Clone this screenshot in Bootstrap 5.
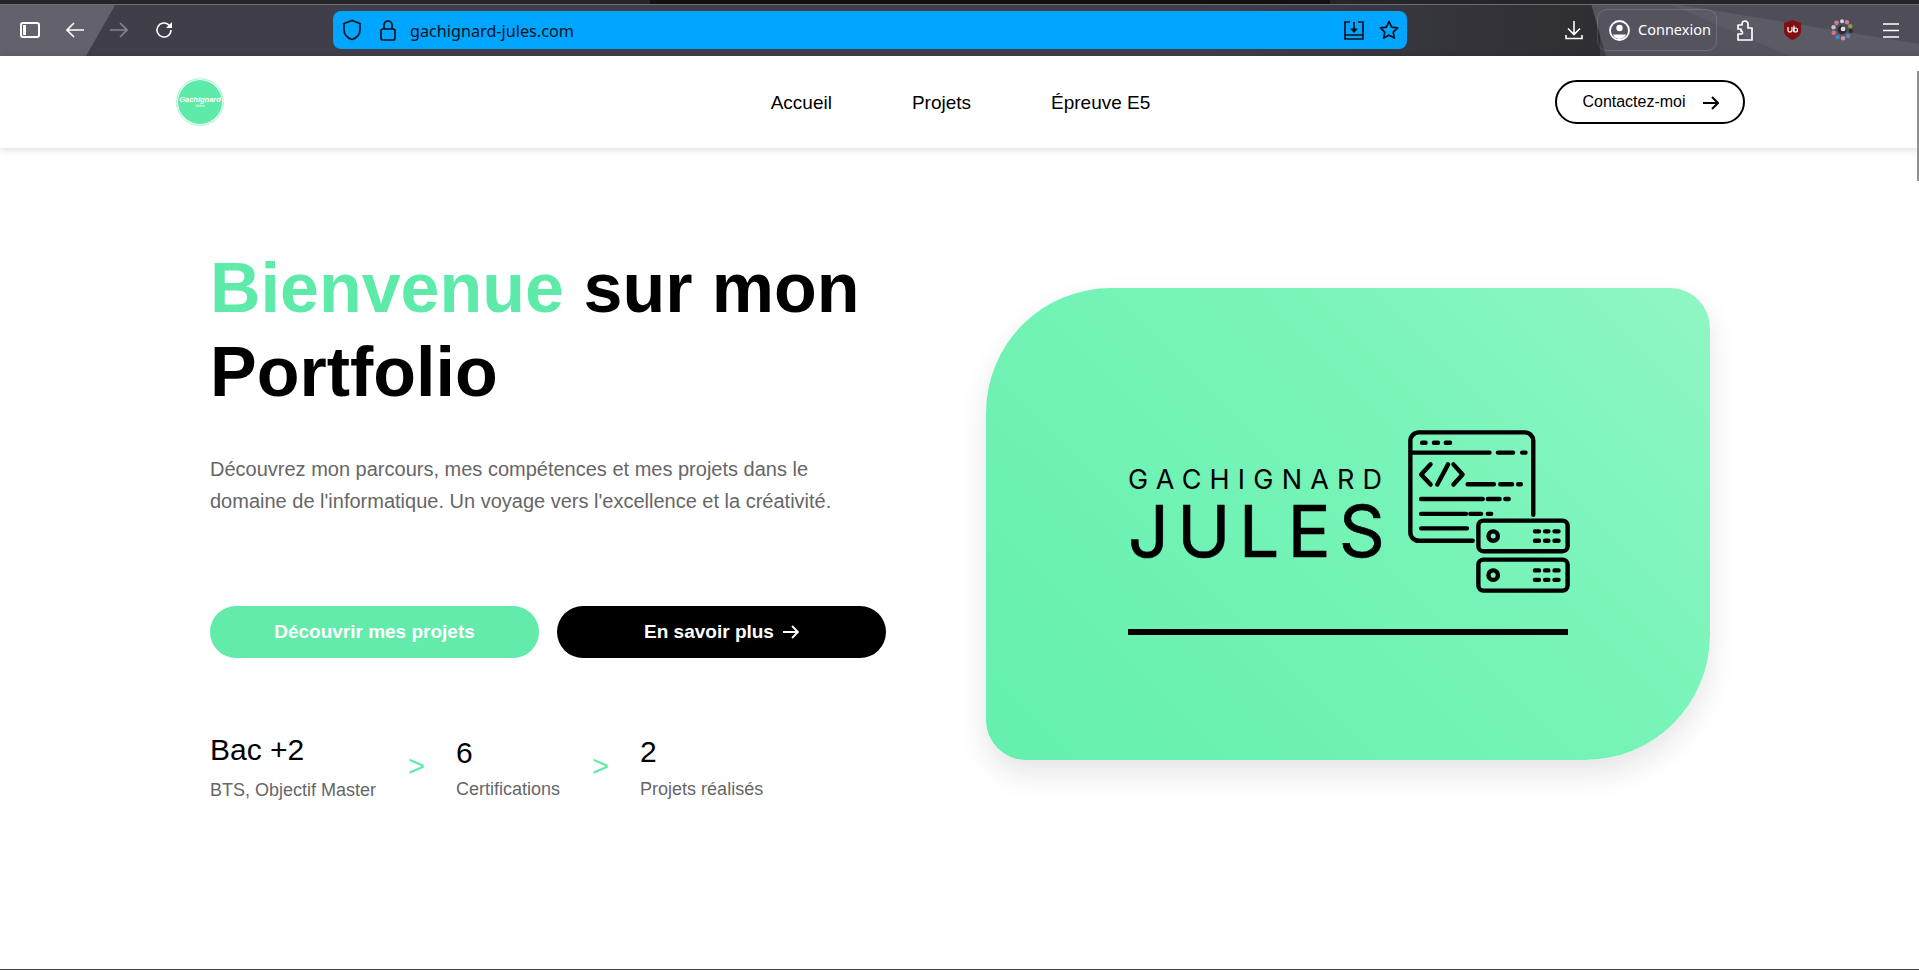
<!DOCTYPE html>
<html lang="fr">

<head>
	<meta charset="UTF-8">
	<meta name="viewport" content="width=device-width, initial-scale=1.0">
	<title>Portfolio - Gachignard Jules</title>
	<link href="https://cdn.jsdelivr.net/npm/bootstrap@5.3.0/dist/css/bootstrap.min.css" rel="stylesheet">
	<style>
		:root { --vert: #5eebaa; }
		html, body { height: 100%; overflow: hidden; }
		body { font-family: "Liberation Sans", Arial, sans-serif; color: #000; background: #fff; border-bottom: 1px solid #3f3f3f; }

		/* barre du navigateur */
		.chrome-bar { height: 56px; padding-top: 11px; position: relative; background: #403f49; color: #fff; }
		.chrome-bg { position: absolute; left: 0; top: 0; width: 100%; height: 100%; }
		.chrome-bar > .chrome-row { position: relative; height: 38px; }
		.ico-side { margin-left: 20px; }
		.ico-back { margin-left: 26px; }
		.ico-next { margin-left: 26px; }
		.ico-reload { margin-left: 27px; }
		.adresse { width: 1074px; height: 38px; margin-left: 160px; background: #00a5ff; border-radius: 8px; color: #06121c; padding: 0 8px 0 9px; }
		.adresse-url { font-family: "Noto Sans", sans-serif; font-size: 16.2px; margin-left: 14px; padding-top: 2px; }
		.ico-lock { margin-left: 18px; }
		.ico-import { margin-left: auto; }
		.ico-star { margin-left: 15px; }
		.ico-dl { margin-left: 158px; }
		.connexion { width: 120px; height: 42px; margin-left: 14px; border: 1px solid rgba(255, 255, 255, .14); border-radius: 10px; padding-left: 11px; font-family: "Noto Sans", sans-serif; font-size: 14.5px; gap: 8px; }
		.ico-puzzle { margin-left: 19px; }
		.ico-ubo { margin-left: 30px; }
		.ico-lang { margin-left: 30px; }
		.ico-menu { margin-left: 30px; }

		/* navigation du site */
		.site-nav { height: 92px; padding: 0 174px 0 176px; background: #fff; box-shadow: 0 1px 8px rgba(0, 0, 0, .16); position: relative; }
		.nav-side { flex: 1 1 0; }
		.site-logo { width: 48px; height: 48px; border-radius: 50%; background: var(--vert); border: 1px solid #c4f8de; box-shadow: inset 0 0 0 1px #fff; color: #fff; line-height: 1; }
		.site-logo b { font-size: 7.5px; font-style: italic; }
		.site-logo i { font-size: 4px; font-style: normal; }
		.site-links { gap: 80px; font-size: 19px; padding-top: 2px; }
		.site-links a { color: #000; text-decoration: none; }
		.btn-contact { width: 190px; height: 44px; border: 2px solid #000; border-radius: 22px; color: #000; font-size: 16px; gap: 17px; padding: 0 0 0 1px; margin-top: -1px; }
		.btn-contact svg { margin-top: 3px; }

		/* hero */
		.hero { padding: 98px 209px 0 210px; gap: 100px; }
		.hero-left { width: 676px; flex: none; }
		.hero-title { font-size: 70px; font-weight: 700; line-height: 84px; margin: 0 0 39px; }
		.hero-title span { color: var(--vert); }
		.hero-text { font-size: 20px; line-height: 32px; color: #666; margin: 0 0 89px; max-width: 650px; }
		.btn-hero { width: 329px; height: 52px; border-radius: 26px; font-size: 19px; font-weight: 700; gap: 9px; border: 0; color: #fff; padding: 0; }
		.btn-vert, .btn-vert:hover { background: #62ebaa; color: #fff; }
		.btn-noir, .btn-noir:hover { background: #000; color: #fff; }
		.hero-btns { gap: 18px; margin-bottom: 74px; }
		.stat-num { font-size: 30px; line-height: 36px; }
		.stat-cap { font-size: 18px; line-height: 24px; color: #666; margin-top: 10px; }
		.stat-b .stat-cap { margin-top: 6px; }
		.stat-c .stat-cap { margin-top: 7px; }
		.stat-b { padding-top: 3px; }
		.stat-c { padding-top: 2px; }
		.stat-sep { color: var(--vert); font-size: 29px; line-height: 1; width: 17px; margin: 20px 31px 0 32px; }

		.hero-card { width: 724px; height: 472px; margin-top: 42px; flex: none; background: linear-gradient(45deg, #64f0ae 0%, #78f4b9 60%, #90f6c4 100%); border-radius: 125px 40px 125px 40px; box-shadow: 0 14px 30px rgba(0, 0, 0, .1); padding: 141px 142px 0; }
		.logo-row { height: 165px; }
		.logo-words { width: 279px; flex: none; padding-top: 37px; }
		.logo-row svg { flex: none; }
		.logo-first { font-family: Inter, sans-serif; font-size: 27px; line-height: 27px; letter-spacing: 8.2px; white-space: nowrap; }
		.logo-last { font-family: Inter, sans-serif; font-size: 72px; line-height: 66px; letter-spacing: 8px; white-space: nowrap; margin-top: 5px; -webkit-text-stroke: .6px #000; }
		.logo-rule { height: 6px; width: 440px; background: #000; margin-top: 35px; }

		.fake-scroll { position: absolute; right: 0; top: 71px; width: 2px; height: 110px; background: #8f8f8f; }
	</style>
</head>

<body>
	<!-- barre du navigateur -->
	<div class="chrome-bar">
		<svg class="chrome-bg" viewBox="0 0 1919 56" preserveAspectRatio="none">
			<defs>
				<linearGradient id="fondDroit" x1="0" x2="1" y1="0" y2="0">
					<stop offset="0" stop-color="#403f49" />
					<stop offset="1" stop-color="#2e2e33" />
				</linearGradient>
			</defs>
			<rect x="1200" y="0" width="400" height="56" fill="url(#fondDroit)" />
			<polygon points="0,0 118,0 86,56 0,56" fill="#62616c" />
			<polygon points="1590,0 1919,0 1919,56 1606,56" fill="#55545e" />
			<polygon points="1660,0 1919,38 1919,56 1790,56" fill="#5c5b65" />
			<polygon points="1680,5 1919,44 1919,5" fill="#4f4e58" />
			<rect x="0" y="0" width="1919" height="4" fill="#26262a" />
			<rect x="650" y="0" width="680" height="4" fill="#111" />
			<rect x="0" y="4" width="1919" height="1" fill="#6e6d77" />
		</svg>
		<div class="chrome-row d-flex align-items-center">
			<svg class="ico-side" width="20" height="16" viewBox="0 0 20 16" fill="none" stroke="#fff" stroke-width="2"><rect x="1" y="1" width="18" height="14" rx="2" /><path d="M3 3h3v10H3z" fill="#fff" stroke="none" /></svg>
			<svg class="ico-back" width="18" height="16" viewBox="0 0 18 16" fill="none" stroke="#fff" stroke-width="1.6"><path d="M18 8H1M8 1 1 8l7 7" /></svg>
			<svg class="ico-next" width="18" height="16" viewBox="0 0 18 16" fill="none" stroke="#85848c" stroke-width="1.6"><path d="M0 8h17M10 1l7 7-7 7" /></svg>
			<svg class="ico-reload" width="18" height="18" viewBox="0 0 18 18" fill="none" stroke="#fff" stroke-width="1.6"><path d="M16 9a7 7 0 1 1-2.2-5.1L16 6" /><path d="M17 1v6h-6z" fill="#fff" stroke="none" /></svg>
			<div class="adresse d-flex align-items-center">
				<svg width="20" height="22" viewBox="0 0 20 22" fill="none" stroke="#06121c" stroke-width="1.7"><path d="M10 1.5 2 4.5v6c0 5 3.5 8.500 8 10 4.500-1.500 8-5 8-10v-6z" /></svg>
				<svg class="ico-lock" width="16" height="21" viewBox="0 0 16 21" fill="none" stroke="#06121c" stroke-width="1.7"><rect x="1" y="9" width="14" height="11" rx="2" /><path d="M4 9V5a4 4 0 0 1 8 0v4" /></svg>
				<span class="adresse-url">gachignard-jules.com</span>
				<svg class="ico-import" width="20" height="19" viewBox="0 0 20 19" fill="none" stroke="#06121c" stroke-width="1.7"><path d="M6 1H1v17h18V1h-5M1 14h18" /><path d="M10 1v9" /><path d="M6 7.500h8L10 12z" fill="#06121c" stroke="none" /></svg>
				<svg class="ico-star" width="20" height="20" viewBox="0 0 20 20" fill="none" stroke="#06121c" stroke-width="1.7" stroke-linejoin="round"><path d="m10 1.500 2.600 5.600 6 .8-4.400 4.200 1.100 6L10 15.200 4.700 18.100l1.100-6L1.400 7.900l6-.8z" /></svg>
			</div>
			<svg class="ico-dl" width="18" height="20" viewBox="0 0 18 20" fill="none" stroke="#fff" stroke-width="1.600"><path d="M9 1v13M3 8.500l6 6 6-6M1 15v3.500h16V15" /></svg>
			<div class="connexion d-flex align-items-center">
				<svg width="21" height="21" viewBox="0 0 21 21" fill="none" stroke="#fff" stroke-width="1.800"><circle cx="10.500" cy="10.500" r="9.500" /><circle cx="10.500" cy="8" r="3.200" fill="#fff" stroke="none" /><path d="M4 14.500h13a7 7 0 0 1-13 0z" fill="#fff" stroke="none" /></svg>
				<span>Connexion</span>
			</div>
			<svg class="ico-puzzle" width="18" height="21" viewBox="0 0 18 21" fill="none" stroke="#fff" stroke-width="1.700" stroke-linejoin="round"><path d="M2 20h14V8h-4V4a3 3 0 0 0-6 0v1H2v4h3v2a1.500 1.500 0 0 1 0 3H2z" /></svg>
			<svg class="ico-ubo" width="17" height="20" viewBox="0 0 17 20"><path d="M8.500 0 17 3v8c0 4-3.500 7-8.500 9C3.500 18 0 15 0 11V3z" fill="#800f12" /><path d="M4 7v3a2 2 0 0 0 4 0V7M10 5.500v5.500" fill="none" stroke="#fff" stroke-width="1.200" /><circle cx="11.500" cy="10" r="2" fill="none" stroke="#fff" stroke-width="1.200" /></svg>
			<svg class="ico-lang" width="22" height="22" viewBox="0 0 20 20">
				<circle cx="10" cy="10" r="4" fill="#2a2a2e" />
				<circle cx="11" cy="9" r="2.200" fill="#ddd" />
				<circle cx="5" cy="3.500" r="2.200" fill="#c9788f" />
				<circle cx="10" cy="2" r="1.800" fill="#d8d8e0" />
				<circle cx="14.500" cy="3" r="2" fill="#d977a5" />
				<circle cx="17.500" cy="6.500" r="2" fill="#7fa84a" />
				<circle cx="18" cy="11" r="1.900" fill="#3a2a1a" />
				<circle cx="15.500" cy="15.500" r="2" fill="#5c7fd0" />
				<circle cx="11" cy="17.500" r="2" fill="#d98aa0" />
				<circle cx="6" cy="16.500" r="2" fill="#3c86c8" />
				<circle cx="2.500" cy="12.500" r="2" fill="#d6718a" />
				<circle cx="2.300" cy="7.500" r="2" fill="#c2c2d8" />
			</svg>
			<svg class="ico-menu" width="16" height="15" viewBox="0 0 16 15" stroke="#fff" stroke-width="1.500"><path d="M0 1h16M0 7.500h16M0 14h16" /></svg>
		</div>
	</div>

	<!-- navigation -->
	<nav class="site-nav d-flex align-items-center">
		<div class="nav-side">
			<div class="site-logo d-flex flex-column align-items-center justify-content-center">
				<b>Gachignard</b>
				<i>Jules</i>
			</div>
		</div>
		<div class="site-links d-flex">
			<a href="#">Accueil</a>
			<a href="#">Projets</a>
			<a href="#">Épreuve E5</a>
		</div>
		<div class="nav-side d-flex justify-content-end">
			<a href="#" class="btn btn-contact d-flex align-items-center justify-content-center">
				Contactez-moi
				<svg width="16" height="14" viewBox="0 0 16 14" fill="none" stroke="#000" stroke-width="2"><path d="M0 7h15M9 1l6 6-6 6" /></svg>
			</a>
		</div>
	</nav>

	<!-- accueil -->
	<main class="hero d-flex">
		<div class="hero-left">
			<h1 class="hero-title"><span>Bienvenue</span> sur mon Portfolio</h1>
			<p class="hero-text">Découvrez mon parcours, mes compétences et mes projets dans le domaine de l'informatique. Un voyage vers l'excellence et la créativité.</p>
			<div class="hero-btns d-flex">
				<a href="#" class="btn btn-hero btn-vert d-flex align-items-center justify-content-center">Découvrir mes projets</a>
				<a href="#" class="btn btn-hero btn-noir d-flex align-items-center justify-content-center">
					En savoir plus
					<svg width="16" height="14" viewBox="0 0 16 14" fill="none" stroke="#fff" stroke-width="1.800"><path d="M0 7h15M9 1l6 6-6 6" /></svg>
				</a>
			</div>
			<div class="d-flex align-items-start">
				<div class="stat-a">
					<div class="stat-num">Bac +2</div>
					<div class="stat-cap">BTS, Objectif Master</div>
				</div>
				<div class="stat-sep">&gt;</div>
				<div class="stat-b">
					<div class="stat-num">6</div>
					<div class="stat-cap">Certifications</div>
				</div>
				<div class="stat-sep">&gt;</div>
				<div class="stat-c">
					<div class="stat-num">2</div>
					<div class="stat-cap">Projets réalisés</div>
				</div>
			</div>
		</div>
		<div class="hero-card">
			<div class="logo-row d-flex">
				<div class="logo-words">
					<div class="logo-first">GACHIGNARD</div>
					<div class="logo-last">JULES</div>
				</div>
				<svg width="165" height="165" viewBox="920 60 490 490" fill="none" stroke="#000" stroke-width="13" stroke-linecap="round" stroke-linejoin="round">
					<path d="M1115 392H955a25 25 0 0 1-25-25V95a25 25 0 0 1 25-25h315a25 25 0 0 1 25 25v220" />
					<path d="M935 130h230M1190 130h45M1262 130h10M965 101h10M1000 101h12M1035 101h13" />
					<path d="M990 165l-28 30 28 30M1042 165l-32 60M1058 165l27 30-27 30" />
					<path d="M1100 224h78M1197 224h35M1250 224h8M962 268h183M1160 268h35M1212 268h10M962 312h133M1108 312h32M1160 312h10M962 355h136" />
					<rect x="1132" y="332" width="265" height="91" rx="15" />
					<rect x="1132" y="448" width="265" height="92" rx="15" />
					<circle cx="1176" cy="378" r="14" />
					<circle cx="1176" cy="494" r="14" />
					<path d="M1300 364h12M1330 364h10M1358 364h12M1300 392h12M1330 392h10M1358 392h12M1300 480h12M1330 480h10M1358 480h12M1300 508h12M1330 508h10M1358 508h12" />
				</svg>
			</div>
			<div class="logo-rule"></div>
		</div>
	</main>

	<div class="fake-scroll"></div>

	<script src="https://cdn.jsdelivr.net/npm/bootstrap@5.3.0/dist/js/bootstrap.bundle.min.js"></script>
</body>

</html>
